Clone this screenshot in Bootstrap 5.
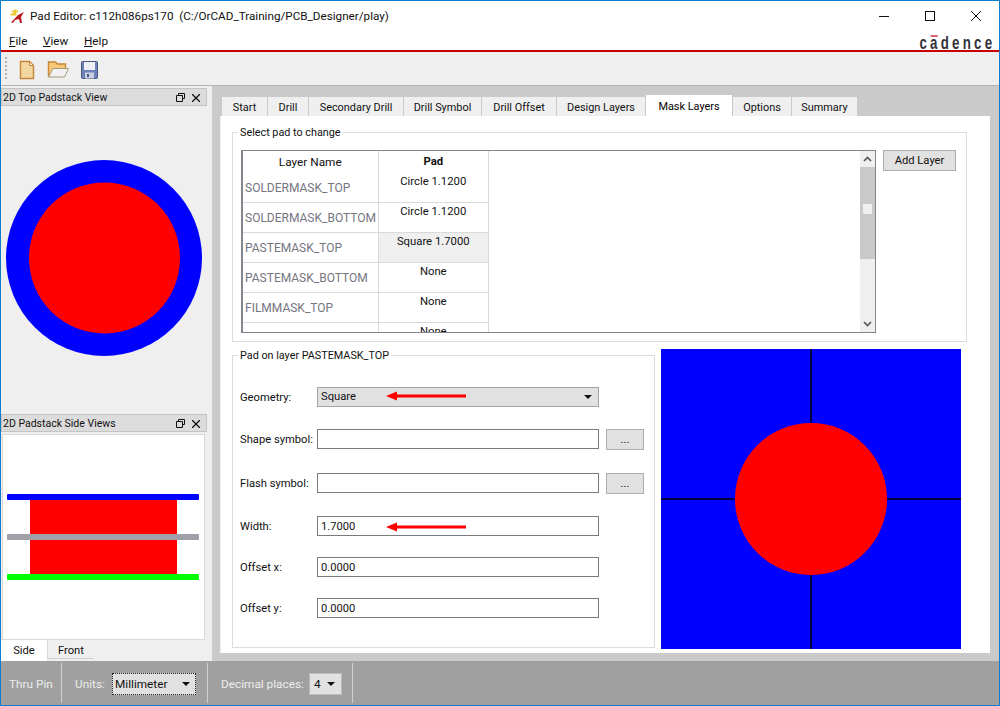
<!DOCTYPE html>
<html lang="en">
<head>
  <meta charset="UTF-8">
  <title>Pad Editor</title>
  <link rel="stylesheet" href="https://cdn.jsdelivr.net/npm/bootstrap@5.3.0/dist/css/bootstrap.min.css">
  <style>
    html, body { margin: 0; height: 706px; overflow: hidden; }
    body { font-family: Roboto, "Noto Sans", "Liberation Sans", sans-serif; font-size: 11.2px; line-height: 16px; color: #111; background: #fff; }
    .app-window { width: 1000px; height: 706px; border: 1px solid #0f7dc9; display: flex; flex-direction: column; background: #fff; }

    .title-row { height: 29px; padding-left: 8px; font-size: 11.7px; }
    .title-text { margin-left: 5px; white-space: pre; }
    .win-btns { margin-left: auto; }
    .win-btn { width: 46px; height: 29px; display: flex; align-items: center; justify-content: center; }
    .menu-row { height: 22px; border-bottom: 2px solid #c80000; padding: 1px 0 0 8px; position: relative; font-size: 11.7px; }
    .menu-row u { text-decoration-thickness: 1px; }
    .menu-row span.menu-item { width: 34px; }
    .menu-row span.menu-item:nth-child(2) { width: 41px; }
    .brand-word { position: absolute; right: 4px; top: 3px; font-family: "Liberation Sans", sans-serif; font-weight: 700; font-size: 19px; line-height: 20px; letter-spacing: 4.6px; color: #33333a; transform: scaleX(.7); transform-origin: right top; }
    .brand-bar { position: absolute; left: 16px; top: 2px; width: 10px; height: 2px; background: #d9606a; }
    .tool-row { height: 34px; background: #efefef; border-bottom: 1px solid #b4b4b4; padding-left: 4px; gap: 7px; }

    .main-area { flex: 1 1 auto; min-height: 0; background: #cacaca; }
    .left-dock { width: 211px; background: #efefef; flex: none; }
    .dock-head { width: 206px; height: 18px; margin-top: 2px; padding: 1px 6px 0 1px; background: #dcdcdc; border: 1px solid #c4c4c4; font-size: 10.5px; }
    .dock-head .head-icons { margin-left: auto; gap: 7px; }
    .top-view { height: 308px; }
    .side-view { width: 203px; height: 206px; margin: 2px 0 0 1px; background: #fff; border: 1px solid #d8d8d8; }
    .dock-tabs { height: 21px; }
    .dock-tab { width: 46px; text-align: center; padding-top: 3px; }
    .dock-tab-on { background: #fff; }
    .dock-tab-off { width: 47px; border-bottom: 1px solid #d0d0d0; height: 19px; padding-top: 3px; border-left: 1px solid #d8d8d8; }

    .right-area { width: 770px; margin-left: 8px; padding-top: 10px; flex: none; }
    .nav-tabs.pad-tabs { border: 0; height: 20px; gap: 1px; margin-left: 2px; flex-wrap: nowrap; align-items: flex-end; }
    .pad-tabs .nav-link { border: 0; border-radius: 0; height: 19px; padding: 3px 0 0; margin: 0; background: #efefef; color: #111; text-align: center; font-size: 10.9px; line-height: 16px; white-space: nowrap; }
    .pad-tabs .nav-link.active { background: #fff; height: 21px; padding-top: 4px; }
    .pad-tabs .nav-item:nth-child(1) .nav-link { width: 45px; }
    .pad-tabs .nav-item:nth-child(2) .nav-link { width: 40px; }
    .pad-tabs .nav-item:nth-child(3) .nav-link { width: 94px; }
    .pad-tabs .nav-item:nth-child(4) .nav-link { width: 77px; }
    .pad-tabs .nav-item:nth-child(5) .nav-link { width: 74px; }
    .pad-tabs .nav-item:nth-child(6) .nav-link { width: 88px; }
    .pad-tabs .nav-item:nth-child(7) .nav-link { width: 86px; }
    .pad-tabs .nav-item:nth-child(8) .nav-link { width: 58px; }
    .pad-tabs .nav-item:nth-child(9) .nav-link { width: 65px; }
    .tab-sheet { height: 537px; background: #fff; border-left: 1px solid #efefef; padding: 16px 0 0 11px; }

    .group-box { position: relative; border: 1px solid #dcdcdc; }
    .group-name { position: absolute; left: 5px; top: -7px; height: 14px; background: #fff; padding: 0 2px; line-height: 14px; font-size: 10.8px; }
    .group-select { width: 735px; height: 210px; padding: 17px 0 0 8px; gap: 7px; }
    .layer-box { width: 635px; height: 183px; border: 2px solid #85858d; border-width: 1px 1px 1px 2px; display: flex; overflow: hidden; background: #fff; }
    .layer-grid { width: 617px; flex: none; align-self: flex-start; }
    .layer-grid table { width: 246px; table-layout: fixed; border-collapse: collapse; margin: 0; }
    .layer-grid th, .layer-grid td { padding: 0; font-size: 11.3px; border: 1px solid #d9d9d9; border-width: 0 1px 1px 0; height: 30px; }
    .layer-grid th { height: 21px; font-size: 11.8px; border-bottom: 0; text-align: center; vertical-align: middle; font-weight: 400; }
    .layer-grid th.pad-col { font-weight: 700; font-size: 11.3px; }
    .layer-grid td.layer-name { color: #75757f; font-size: 12px; padding-left: 2px; vertical-align: middle; padding-top: 1px; white-space: nowrap; }
    .layer-grid td.pad-cell { text-align: center; vertical-align: top; padding-top: 1px; }
    .layer-grid tbody tr:first-child td.pad-cell { padding-top: 2px; }
    .layer-grid tbody tr:first-child td.layer-name { padding-top: 3px; }
    .col-name { width: 135px; }
    .layer-grid td.pad-on { background: #efefef; }
    .vert-scroll { width: 15px; margin: 0 1px 0 auto; background: #efefef; display: flex; flex-direction: column; align-items: center; position: relative; }
    .scroll-end { height: 16px; display: flex; align-items: center; justify-content: center; }
    .scroll-track { width: 15px; height: 92px; background: #c9c9c9; display: flex; align-items: center; justify-content: center; }
    .scroll-thumb { width: 9px; height: 10px; background: #efefef; margin-top: -8px; }
    .scroll-gap { flex: 1 1 auto; }
    .flat-btn { background: #e1e1e1; border: 1px solid #adadad; border-radius: 0; color: #111; font-size: 11.2px; line-height: 16px; padding: 0; text-align: center; }
    .add-btn { width: 73px; height: 21px; padding-top: 1px; }

    .lower-row { margin-top: 7px; gap: 6px; align-items: flex-start; }
    .group-pad { width: 423px; height: 293px; margin-top: 6px; padding: 31px 0 0 7px; }
    .pad-row { height: 20px; margin-bottom: 22px; }
    .pad-row:nth-of-type(2) { margin-bottom: 24px; }
    .pad-row:nth-of-type(3) { margin-bottom: 23px; }
    .pad-row:nth-of-type(4), .pad-row:nth-of-type(5) { margin-bottom: 21px; }
    .pad-label { width: 77px; flex: none; white-space: nowrap; padding-top: 2px; }
    .pad-input { width: 282px; height: 20px; padding: 0 3px; border: 1px solid #7a7a7a; border-radius: 0; font-size: 11.2px; line-height: 16px; color: #111; background: #fff; font-family: inherit; }
    .pad-input:focus { outline: 0; box-shadow: none; }
    .geo-select { background: #e1e1e1; border-color: #a5a5a5; display: flex; align-items: center; justify-content: space-between; padding-right: 6px; }
    .caret-down { width: 0; height: 0; border-left: 4px solid transparent; border-right: 4px solid transparent; border-top: 4px solid #111; }
    .dots-btn { width: 38px; height: 21px; margin-left: 7px; margin-top: 1px; line-height: 20px; }
    .red-arrow { position: absolute; left: 153px; width: 80px; height: 10px; }
    .arrow-geo { top: 35px; }
    .arrow-width { top: 166px; }
    .view-canvas { width: 300px; height: 300px; flex: none; display: block; }

    .status-row { height: 44px; background: #a0a0a0; color: #ededed; flex: none; font-size: 11.8px; }
    .stat-sec { height: 40px; padding-top: 2px; border-right: 1px solid #cfcfcf; display: flex; align-items: center; flex: none; }
    .stat-a { width: 61px; padding-left: 8px; }
    .stat-b { width: 146px; padding-left: 13px; }
    .stat-b > span { width: 37px; }
    .stat-c { width: 145px; padding-left: 13px; }
    .stat-c > span { width: 88px; }
    .stat-combo { height: 22px; background: #e1e1e1; color: #111; display: flex; align-items: center; justify-content: space-between; padding: 0 6px 0 3px; }
    .combo-mm { width: 84px; outline: 1px dotted #222; outline-offset: -1px; }
    .combo-dec { width: 33px; border: 1px solid #bbb; padding-left: 4px; }
  </style>
</head>
<body>
<div class="app-window">

  <div class="title-row d-flex align-items-center">
    <svg width="16" height="16" viewBox="0 0 16 16">
      <path d="M3 3.500h6M6 1.500v4M1.500 6.500h6" stroke="#ecc92e" stroke-width="2" fill="none"/>
      <path d="M2 14.500 L9 7 L15 4 L12 9 L13 15 L11 15 L10 11 L6 12 L4 15Z" fill="#b81c1c"/>
    </svg>
    <span class="title-text">Pad Editor: c112h086ps170  (C:/OrCAD_Training/PCB_Designer/play)</span>
    <div class="win-btns d-flex">
      <div class="win-btn"><svg width="10" height="10"><path d="M0 5.500h10" stroke="#111"/></svg></div>
      <div class="win-btn"><svg width="10" height="10"><rect x=".5" y=".5" width="9" height="9" fill="none" stroke="#111"/></svg></div>
      <div class="win-btn"><svg width="10" height="10"><path d="M0 0l10 10M10 0L0 10" stroke="#111"/></svg></div>
    </div>
  </div>

  <div class="menu-row d-flex align-items-center">
    <span class="menu-item"><u>F</u>ile</span>
    <span class="menu-item"><u>V</u>iew</span>
    <span class="menu-item"><u>H</u>elp</span>
    <span class="brand-word">cadence<i class="brand-bar"></i></span>
  </div>

  <div class="tool-row d-flex align-items-center">
    <svg width="3" height="28" viewBox="0 0 3 28">
      <path d="M0 2h2v2H0zM0 6h2v2H0zM0 10h2v2H0zM0 14h2v2H0zM0 18h2v2H0zM0 22h2v2H0z" fill="#b4b4b4"/>
    </svg>
    <svg width="24" height="24" viewBox="0 0 24 24">
      <path d="M5.500 4.500h9l4 4v13h-13z" fill="#f2d7a0" stroke="#c88638" stroke-width="1.4"/>
      <path d="M14.500 4.500v4h4z" fill="#fff4dc" stroke="#c88638"/>
    </svg>
    <svg width="24" height="24" viewBox="0 0 24 24">
      <path d="M2.500 20v-15h7l2 2h8v4" fill="#f6c878" stroke="#c88638" stroke-width="1.4"/>
      <path d="M2.500 20l4.500-8.500h15.500l-4 8.500z" fill="#f2f2f2" stroke="#a89878"/>
    </svg>
    <svg width="24" height="24" viewBox="0 0 24 24">
      <rect x="4.500" y="4.500" width="16" height="17" rx="1" fill="#6d82b8" stroke="#47567f"/>
      <rect x="7" y="5" width="11" height="8" fill="#eef0f6"/>
      <rect x="8" y="15.500" width="9" height="6" fill="#c8d0e0"/>
      <rect x="10" y="17" width="2" height="3" fill="#47567f"/>
    </svg>
  </div>

  <div class="main-area d-flex">
    <div class="left-dock">
      <div class="dock-head d-flex align-items-center">
        <span>2D Top Padstack View</span>
        <span class="head-icons d-flex align-items-center">
          <svg width="9" height="9"><path d="M2.500 2.500v-2h6v5h-2M.5 2.500h6v6h-6z" fill="none" stroke="#111"/></svg>
          <svg width="8" height="8"><path d="M0 0l8 8M8 0L0 8" stroke="#111" stroke-width="1.3"/></svg>
        </span>
      </div>
      <svg class="top-view d-block" width="206" height="308">
        <circle cx="103" cy="152" r="98" fill="#0000ff"/>
        <circle cx="103.500" cy="152" r="75.500" fill="#ff0000"/>
      </svg>
      <div class="dock-head d-flex align-items-center mt-0">
        <span>2D Padstack Side Views</span>
        <span class="head-icons d-flex align-items-center">
          <svg width="9" height="9"><path d="M2.500 2.500v-2h6v5h-2M.5 2.500h6v6h-6z" fill="none" stroke="#111"/></svg>
          <svg width="8" height="8"><path d="M0 0l8 8M8 0L0 8" stroke="#111" stroke-width="1.3"/></svg>
        </span>
      </div>
      <div class="side-view">
        <svg class="d-block" width="201" height="204">
          <rect x="27" y="60" width="147" height="80" fill="#ff0000"/>
          <rect x="4" y="59" width="192" height="6" rx="1" fill="#0000ff"/>
          <rect x="4" y="99" width="192" height="6" rx="1" fill="#a0a0a8"/>
          <rect x="4" y="139" width="192" height="6" rx="1" fill="#00ff00"/>
        </svg>
      </div>
      <div class="dock-tabs d-flex align-items-start">
        <div class="dock-tab dock-tab-on h-100">Side</div>
        <div class="dock-tab dock-tab-off">Front</div>
      </div>
    </div>

    <div class="right-area">
      <ul class="nav nav-tabs pad-tabs">
        <li class="nav-item"><a class="nav-link" href="#">Start</a></li>
        <li class="nav-item"><a class="nav-link" href="#">Drill</a></li>
        <li class="nav-item"><a class="nav-link" href="#">Secondary Drill</a></li>
        <li class="nav-item"><a class="nav-link" href="#">Drill Symbol</a></li>
        <li class="nav-item"><a class="nav-link" href="#">Drill Offset</a></li>
        <li class="nav-item"><a class="nav-link" href="#">Design Layers</a></li>
        <li class="nav-item"><a class="nav-link active" href="#">Mask Layers</a></li>
        <li class="nav-item"><a class="nav-link" href="#">Options</a></li>
        <li class="nav-item"><a class="nav-link" href="#">Summary</a></li>
      </ul>
      <div class="tab-sheet">
        <div class="group-box group-select d-flex align-items-start">
          <span class="group-name">Select pad to change</span>
          <div class="layer-box">
            <div class="layer-grid">
              <table class="table-borderless">
                <colgroup><col class="col-name"><col></colgroup>
                <thead><tr><th>Layer Name</th><th class="pad-col">Pad</th></tr></thead>
                <tbody id="layer-rows"></tbody>
              </table>
            </div>
            <div class="vert-scroll">
              <div class="scroll-end"><svg width="9" height="6"><path d="M1 5l3.500-3.500L8 5" fill="none" stroke="#555" stroke-width="1.6"/></svg></div>
              <div class="scroll-track"><div class="scroll-thumb"></div></div>
              <div class="scroll-gap"></div>
              <div class="scroll-end"><svg width="9" height="6"><path d="M1 1l3.500 3.500L8 1" fill="none" stroke="#555" stroke-width="1.6"/></svg></div>
            </div>
          </div>
          <button type="button" class="flat-btn add-btn">Add Layer</button>
        </div>

        <div class="lower-row d-flex">
          <div class="group-box group-pad">
            <span class="group-name">Pad on layer PASTEMASK_TOP</span>
            <div class="pad-row d-flex align-items-center">
              <span class="pad-label">Geometry:</span>
              <div class="pad-input geo-select"><span>Square</span><i class="caret-down"></i></div>
            </div>
            <div class="pad-row d-flex align-items-center">
              <span class="pad-label">Shape symbol:</span>
              <input class="pad-input" type="text" value="">
              <button type="button" class="flat-btn dots-btn">...</button>
            </div>
            <div class="pad-row d-flex align-items-center">
              <span class="pad-label">Flash symbol:</span>
              <input class="pad-input" type="text" value="">
              <button type="button" class="flat-btn dots-btn">...</button>
            </div>
            <div class="pad-row d-flex align-items-center">
              <span class="pad-label">Width:</span>
              <input class="pad-input" type="text" value="1.7000">
            </div>
            <div class="pad-row d-flex align-items-center">
              <span class="pad-label">Offset x:</span>
              <input class="pad-input" type="text" value="0.0000">
            </div>
            <div class="pad-row d-flex align-items-center">
              <span class="pad-label">Offset y:</span>
              <input class="pad-input" type="text" value="0.0000">
            </div>
            <svg class="red-arrow arrow-geo" viewBox="0 0 80 10"><path d="M0 5L11 0.500V3.500H80V6.500H11V9.500Z" fill="#ff0000"/></svg>
            <svg class="red-arrow arrow-width" viewBox="0 0 80 10"><path d="M0 5L11 0.500V3.500H80V6.500H11V9.500Z" fill="#ff0000"/></svg>
          </div>
          <svg class="view-canvas" width="300" height="300">
            <rect width="300" height="300" fill="#0000ff"/>
            <rect x="149" y="0" width="2" height="300" fill="#000040"/>
            <rect x="0" y="149" width="300" height="2" fill="#000040"/>
            <circle cx="150" cy="150" r="76" fill="#ff0000"/>
          </svg>
        </div>
      </div>
    </div>
  </div>

  <div class="status-row d-flex align-items-center">
    <div class="stat-sec stat-a">Thru Pin</div>
    <div class="stat-sec stat-b">
      <span>Units:</span>
      <div class="stat-combo combo-mm"><span>Millimeter</span><i class="caret-down"></i></div>
    </div>
    <div class="stat-sec stat-c">
      <span>Decimal places:</span>
      <div class="stat-combo combo-dec"><span>4</span><i class="caret-down"></i></div>
    </div>
  </div>
</div>

<script>
  const layers = [
    ['SOLDERMASK_TOP', 'Circle 1.1200'],
    ['SOLDERMASK_BOTTOM', 'Circle 1.1200'],
    ['PASTEMASK_TOP', 'Square 1.7000', true],
    ['PASTEMASK_BOTTOM', 'None'],
    ['FILMMASK_TOP', 'None'],
    ['', 'None']
  ];
  document.getElementById('layer-rows').innerHTML = layers.map(l => `
    <tr><td class="layer-name">${l[0]}</td><td class="pad-cell${l[2] ? ' pad-on' : ''}">${l[1]}</td></tr>
  `).join('');
</script>
<script src="https://cdn.jsdelivr.net/npm/bootstrap@5.3.0/dist/js/bootstrap.bundle.min.js"></script>
</body>
</html>
